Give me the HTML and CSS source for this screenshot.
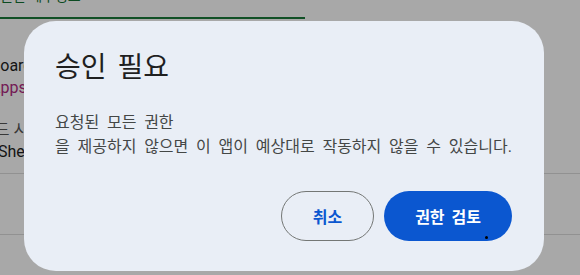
FILE: index.html
```html
<!DOCTYPE html>
<html lang="ko">
<head>
  <meta charset="UTF-8">
  <meta name="viewport" content="width=device-width, initial-scale=1.0">
  <title>승인 필요</title>
  <link rel="stylesheet" href="styles.css">
</head>
<body>
  <div class="page">
    <div class="tabs"><span class="tab">권한 세부정보</span></div>

    <div class="item">
      <div class="item-title">Dashboard</div>
      <div class="item-link">Apps Script</div>
    </div>

    <div class="item item-last">
      <div class="item-sub">코드 시트</div>
      <div class="item-name">Sheets</div>
    </div>

    <div class="row"></div>
    <div class="row row-end"><span class="ring"></span></div>
  </div>

  <div class="scrim"></div>

  <div class="dialog" role="dialog" aria-labelledby="dlgTitle">
    <h2 id="dlgTitle" class="dialog-title">승인 필요</h2>
    <p class="dialog-text">요청된 모든 권한<br>을 제공하지 않으면 이 앱이 예상대로 작동하지 않을 수 있습니다.</p>
    <div class="dialog-actions">
      <button class="btn btn-outline">취소</button>
      <button class="btn btn-filled">권한 검토<span class="dot"></span></button>
    </div>
  </div>
</body>
</html>
```

FILE: styles.css
```css
body { margin: 0; font-family: Roboto, "Noto Sans CJK KR", sans-serif; background: #fff; }
.page { height: 275px; overflow: hidden; background: #fff; }

.tabs { height: 17px; width: 305px; border-bottom: 2px solid #1b7a3a; overflow: hidden; }
.tab { display: block; margin-top: -15px; font-size: 14px; color: #137333; }

.item { padding-top: 36px; font-size: 16px; line-height: 22px; white-space: nowrap; }
.item-title { margin-left: -45px; color: #1f1f1f; }
.item-link { margin-left: -10px; color: #b02a82; }
.item-sub { margin-left: -20px; color: #555; }
.item-name { margin-left: -2px; color: #1f1f1f; }
.item-last { padding-top: 20px; padding-bottom: 10px; border-bottom: 1px solid #dcdcdc; }

.row { height: 60px; border-bottom: 1px solid #dcdcdc; }
.row-end { border-bottom: none; }
.ring { display: block; width: 24px; height: 24px; margin: 40px 0 0 450px; border: 2px solid #1e8e3e; border-radius: 50%; }

.scrim { position: fixed; inset: 0; background: rgba(0,0,0,0.34); }

.dialog { position: fixed; left: 24px; top: 21px; width: 520px; height: 250px; box-sizing: border-box; padding: 31px 32px 30px 31px; background: #e9eef6; border-radius: 32px; display: flex; flex-direction: column; }
.dialog-title { margin: 0; font-size: 28px; line-height: 32px; font-weight: 400; color: #1f1f1f; word-spacing: 4px; }
.dialog-text { margin: 27px 0 0; font-size: 16px; line-height: 24px; color: #444746; word-spacing: 3.8px; white-space: nowrap; }
.dialog-actions { margin-top: auto; display: flex; justify-content: flex-end; gap: 10px; }

.btn { position: relative; height: 50px; padding: 0 31px; border-radius: 25px; font-family: inherit; font-size: 16px; font-weight: 700; word-spacing: 3px; cursor: pointer; }
.btn-outline { background: transparent; border: 1px solid #747775; color: #0b57d0; }
.btn-filled { background: #0b57d0; border: none; color: #fff; }
.dot { position: absolute; left: 101px; bottom: 2px; width: 3px; height: 3px; border-radius: 50%; background: #000; }
```
